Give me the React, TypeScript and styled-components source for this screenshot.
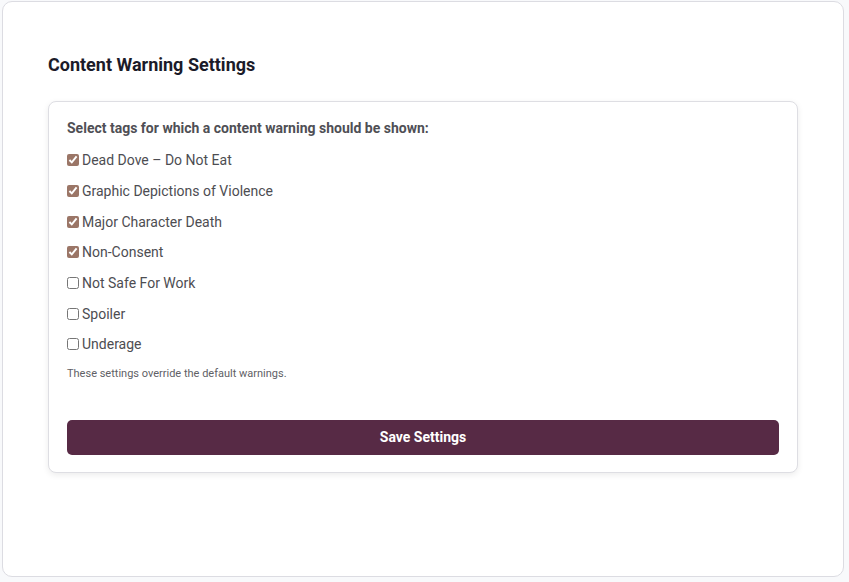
import React, { useState } from "react";
import styled, { createGlobalStyle } from "styled-components";

const Global = createGlobalStyle`
  html, body { margin: 0; padding: 0; background: #f8f9fb; }
  body { font-family: Roboto, "Noto Sans", "Liberation Sans", sans-serif; }
  * { box-sizing: border-box; }
`;

const Page = styled.div`
  padding: 1px 5px 5px 2px;
`;

const Panel = styled.div`
  background: #ffffff;
  border: 1px solid #dcdce2;
  border-radius: 10px;
  height: 576px;
  padding: 52px 45px 45px 45px;
`;

const Title = styled.h2`
  margin: 0 0 25px 0;
  font-size: 18px;
  line-height: 22px;
  font-weight: 700;
  color: #1b1b29;
`;

const Card = styled.div`
  width: 750px;
  background: #ffffff;
  border: 1px solid #dedee3;
  border-radius: 8px;
  box-shadow: 0 2px 6px rgba(0, 0, 0, 0.08);
  padding: 18px 18px 17px 18px;
`;

const Prompt = styled.div`
  font-size: 14px;
  line-height: 17px;
  font-weight: 700;
  color: #4f4f55;
  margin-bottom: 8px;
`;

const List = styled.div`
  display: flex;
  flex-direction: column;
`;

const Row = styled.label`
  display: flex;
  align-items: center;
  height: 30.7px;
  font-size: 14px;
  color: #4d4d52;
  cursor: pointer;
`;

const Box = styled.input`
  width: 12px;
  height: 12px;
  margin: 0 3px 0 0;
  accent-color: #9b7667;
`;

const Note = styled.p`
  margin: 7px 0 0 0;
  font-size: 11px;
  line-height: 14px;
  color: #5f5f66;
`;

const SaveButton = styled.button`
  display: block;
  width: 100%;
  height: 35px;
  margin-top: 39px;
  border: none;
  border-radius: 5px;
  background: #572a45;
  color: #ffffff;
  font-family: Roboto, "Noto Sans", "Liberation Sans", sans-serif;
  font-size: 14px;
  font-weight: 700;
  cursor: pointer;
`;

const TAGS: { name: string; on: boolean }[] = [
  { name: "Dead Dove – Do Not Eat", on: true },
  { name: "Graphic Depictions of Violence", on: true },
  { name: "Major Character Death", on: true },
  { name: "Non-Consent", on: true },
  { name: "Not Safe For Work", on: false },
  { name: "Spoiler", on: false },
  { name: "Underage", on: false },
];

export default function App() {
  const [state, setState] = useState<boolean[]>(TAGS.map((t) => t.on));
  return (
    <>
      <Global />
      <Page>
        <Panel>
          <Title>Content Warning Settings</Title>
          <Card>
            <Prompt>Select tags for which a content warning should be shown:</Prompt>
            <List>
              {TAGS.map((t, i) => (
                <Row key={t.name}>
                  <Box
                    type="checkbox"
                    checked={state[i]}
                    onChange={() =>
                      setState((s) => s.map((v, j) => (j === i ? !v : v)))
                    }
                  />
                  {t.name}
                </Row>
              ))}
            </List>
            <Note>These settings override the default warnings.</Note>
            <SaveButton>Save Settings</SaveButton>
          </Card>
        </Panel>
      </Page>
    </>
  );
}
